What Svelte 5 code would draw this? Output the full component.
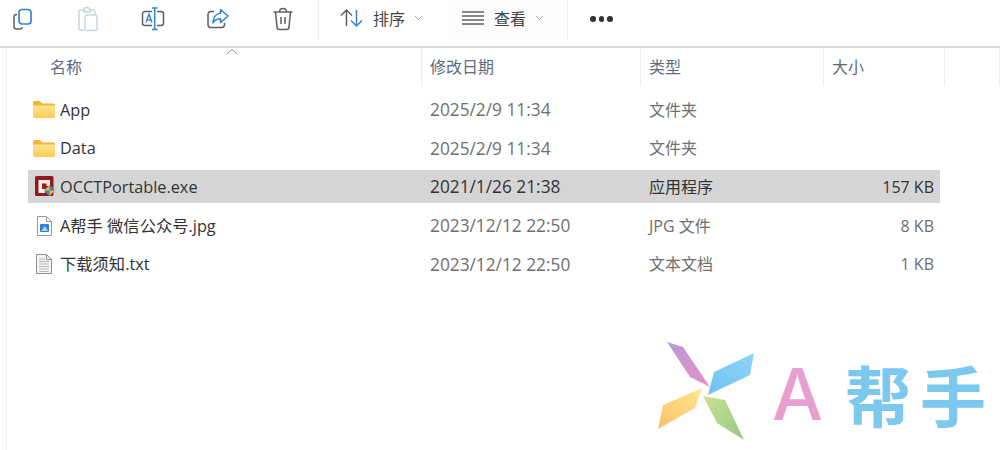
<script>
  const columns = ['名称', '修改日期', '类型', '大小']
  const files = [
    { name: 'App', date: '2025/2/9 11:34', type: '文件夹', size: '', icon: 'folder' },
    { name: 'Data', date: '2025/2/9 11:34', type: '文件夹', size: '', icon: 'folder' },
    { name: 'OCCTPortable.exe', date: '2021/1/26 21:38', type: '应用程序', size: '157 KB', icon: 'exe', selected: true },
    { name: 'A帮手 微信公众号.jpg', date: '2023/12/12 22:50', type: 'JPG 文件', size: '8 KB', icon: 'jpg', cjk: true },
    { name: '下载须知.txt', date: '2023/12/12 22:50', type: '文本文档', size: '1 KB', icon: 'txt', cjk: true }
  ]
</script>

<div class="window">
  <div class="toolbar">
    <div class="tools">
      <button class="tool" aria-label="复制">
        <svg width="24" height="24" viewBox="0 0 24 24" fill="none">
          <path d="M6 7.500H5.500A2.500 2.500 0 0 0 3 10v9.500A2.500 2.500 0 0 0 5.500 22H9a2.500 2.500 0 0 0 2.400-1.800" stroke="#5f5f5f" stroke-width="1.500"/>
          <rect x="8" y="2.500" width="12" height="14.500" rx="3" stroke="#2f86d1" stroke-width="1.700"/>
        </svg>
      </button>
      <button class="tool" aria-label="粘贴">
        <svg width="24" height="26" viewBox="0 0 24 26" fill="none">
          <path d="M8 4H4.500A1.500 1.500 0 0 0 3 5.500V22.500A1.500 1.500 0 0 0 4.500 24H8" stroke="#cfcfcf" stroke-width="1.400"/>
          <path d="M8 4.500C8 2.500 9 1.500 11 1.500S14 2.500 14 4.500V6H8Z" stroke="#cfcfcf" stroke-width="1.400"/>
          <path d="M14 4H17.500A1.500 1.500 0 0 1 19 5.500V8" stroke="#cfcfcf" stroke-width="1.400"/>
          <rect x="9" y="9" width="12" height="15.500" rx="1.800" stroke="#c3d6e6" stroke-width="1.400"/>
        </svg>
      </button>
      <button class="tool" aria-label="重命名">
        <svg width="24" height="24" viewBox="0 0 24 24" fill="none">
          <path d="M11 4.500H4A2.500 2.500 0 0 0 1.500 7V16A2.500 2.500 0 0 0 4 18.500H11M16 4.500H20A2.500 2.500 0 0 1 22.500 7V16A2.500 2.500 0 0 1 20 18.500H16" stroke="#5f5f5f" stroke-width="1.500"/>
          <path d="M11 1H16.500M13.700 1V22.500M11 22.500H16.500" stroke="#2f86d1" stroke-width="1.500"/>
          <path d="M5 15.500L8 7L11 15.500M6 13H10" stroke="#2f86d1" stroke-width="1.400"/>
        </svg>
      </button>
      <button class="tool" aria-label="共享">
        <svg width="24" height="24" viewBox="0 0 24 24" fill="none">
          <path d="M8 4.500H5A3 3 0 0 0 2 7.500V17.500A3 3 0 0 0 5 20.500H15.500A3 3 0 0 0 18.500 17.500V16" stroke="#5f5f5f" stroke-width="1.500"/>
          <path d="M14.500 2.500L22 9L14.500 15.500V11.800C11 11.800 8.500 13 7 16C7 11 9.500 6.800 14.500 6.200Z" stroke="#2f86d1" stroke-width="1.600" stroke-linejoin="round"/>
        </svg>
      </button>
      <button class="tool" aria-label="删除">
        <svg width="24" height="24" viewBox="0 0 24 24" fill="none" stroke="#5f5f5f" stroke-width="1.500">
          <path d="M2.500 5H21.500M8.500 5C8.500 2.800 10 1.500 12 1.500S15.500 2.800 15.500 5"/>
          <path d="M4.500 5L6 20A2.500 2.500 0 0 0 8.500 22.500H15.500A2.500 2.500 0 0 0 18 20L19.500 5"/>
          <path d="M10 10V17M14 10V17"/>
        </svg>
      </button>
    </div>
    <div class="divider"></div>
    <button class="menu sort">
      <svg width="24" height="20" viewBox="0 0 24 20" fill="none" stroke-width="1.500">
        <path d="M6.500 18V2M1 7.500L6.500 2L12 7.500" stroke="#5f5f5f"/>
        <path d="M16.500 2V18M11 12.500L16.500 18L22 12.500" stroke="#2f86d1"/>
      </svg>
      <span>排序</span>
      <svg class="chev" width="9" height="6" viewBox="0 0 9 6" fill="none"><path d="M1 1L4.500 4.500L8 1" stroke="#a8a8a8"/></svg>
    </button>
    <button class="menu view">
      <svg width="22" height="16" viewBox="0 0 22 16" fill="none" stroke="#606060" stroke-width="1.400">
        <path d="M0 2H22M0 6H22M0 10H22M0 14H22"/>
      </svg>
      <span>查看</span>
      <svg class="chev" width="9" height="6" viewBox="0 0 9 6" fill="none"><path d="M1 1L4.500 4.500L8 1" stroke="#a8a8a8"/></svg>
    </button>
    <div class="divider"></div>
    <div class="more"><i></i><i></i><i></i></div>
  </div>

  <div class="pane">
    <div class="head">
      {#each columns as col}
        <div class="col">{col}</div>
      {/each}
      <div class="col"></div>
      <svg class="sort-caret" width="12" height="7" viewBox="0 0 12 7" fill="none"><path d="M1 6L6 1.500L11 6" stroke="#8a8a8a"/></svg>
    </div>

    <div class="rows">
      {#each files as file}
        <div class="row" class:selected={file.selected}>
          <div class="name">
            <span class="icon">
              {#if file.icon === 'folder'}
                <svg width="22" height="17" viewBox="0 0 22 17">
                  <defs>
                    <linearGradient id="fold" x1="0" y1="0" x2="0" y2="1">
                      <stop offset="0" stop-color="#ffe590"/>
                      <stop offset="1" stop-color="#fccb55"/>
                    </linearGradient>
                  </defs>
                  <path d="M0 1.500A1.500 1.500 0 0 1 1.500 0H7L9.500 2.500H20.500A1.500 1.500 0 0 1 22 4V6H0Z" fill="#f2b43a"/>
                  <path d="M0 4.500H22V15.500A1.500 1.500 0 0 1 20.500 17H1.500A1.500 1.500 0 0 1 0 15.500Z" fill="url(#fold)"/>
                </svg>
              {:else if file.icon === 'exe'}
                <svg class="exe" width="20" height="21" viewBox="0 0 20 21">
                  <rect width="18.500" height="20" rx="1.500" fill="#8d1b1f"/>
                  <path d="M3.500 4H15V10H11.500V7.500H7V13H10V17H3.500Z" fill="#f4ece8"/>
                  <path d="M14.500 9L20 14.500L14.500 20L9 14.500Z" fill="#e9b92e"/>
                  <path d="M14.500 9L20 14.500H14.500Z" fill="#3f7fc8"/>
                  <path d="M9 14.500H14.500V20Z" fill="#3f7fc8"/>
                </svg>
              {:else if file.icon === 'jpg'}
                <svg width="16" height="20" viewBox="0 0 16 20" fill="none">
                  <path d="M1.500 .5H10.500L15.500 5.500V19.500H1.500Z" fill="#fff" stroke="#8e9aa6"/>
                  <path d="M10.500 .5V5.500H15.500" stroke="#8e9aa6"/>
                  <rect x="4" y="8" width="9" height="8" rx="1" fill="#2f7fd0"/>
                  <path d="M5 15L9 10L12 15Z" fill="#a9d4f5"/>
                </svg>
              {:else}
                <svg width="16" height="20" viewBox="0 0 16 20" fill="none">
                  <path d="M.5 .5H10.500L15.500 5.500V19.500H.5Z" fill="#f6f6f6" stroke="#8f8f8f"/>
                  <path d="M10.500 .5V5.500H15.500" stroke="#8f8f8f"/>
                  <path d="M3 5H9M3 7.500H13M3 10H13M3 12.500H13M3 15H13M3 17.500H13" stroke="#b4b4b4"/>
                </svg>
              {/if}
            </span>
            <span class="label" class:cjk={file.cjk}>{file.name}</span>
          </div>
          <div class="cell date">{file.date}</div>
          <div class="cell type">{file.type}</div>
          <div class="cell size">{file.size}</div>
        </div>
      {/each}
    </div>
  </div>

  <div class="brand">
    <svg width="100" height="100" viewBox="0 0 100 100">
      <defs>
        <linearGradient id="pk" x1="0" y1="0" x2="1" y2="1"><stop offset="0" stop-color="#b79ad8"/><stop offset="1" stop-color="#ea8fc4"/></linearGradient>
        <linearGradient id="bl" x1="1" y1="0" x2="0" y2="1"><stop offset="0" stop-color="#8fd4f5"/><stop offset="1" stop-color="#6fc2f2"/></linearGradient>
        <linearGradient id="or" x1="1" y1="0" x2="0" y2="1"><stop offset="0" stop-color="#ffe88a"/><stop offset="1" stop-color="#fdbf6f"/></linearGradient>
        <linearGradient id="gr" x1="0" y1="0" x2="1" y2="1"><stop offset="0" stop-color="#cfe08f"/><stop offset="1" stop-color="#93c98c"/></linearGradient>
      </defs>
      <path d="M10 0L26 5L53 45L33 35Z" fill="url(#pk)"/>
      <path d="M97 11L93 33L51 53L57 30Z" fill="url(#bl)"/>
      <path d="M45 46L38 66L1 87L6 63Z" fill="url(#or)"/>
      <path d="M46 54L68 58L87 98L60 81Z" fill="url(#gr)"/>
    </svg>
    <span class="a">A</span>
    <span class="zh">帮手</span>
  </div>
</div>

<style>
  :global(body) {
    margin: 0;
    background: #fff;
  }

  .window {
    position: relative;
    width: 1000px;
    height: 450px;
    overflow: hidden;
    background: #fff;
    color: #3f3f3f;
    font-family: "Open Sans", "Noto Sans CJK SC", sans-serif;
    font-size: 16px;
  }

  button {
    border: 0;
    padding: 0;
    background: none;
    font: inherit;
    color: inherit;
    display: flex;
    align-items: center;
    justify-content: center;
  }

  .toolbar {
    height: 46px;
    display: flex;
    align-items: flex-start;
    border-bottom: 2px solid #d9d9d9;
  }

  .tools {
    display: flex;
    gap: 41px;
    padding: 6px 0 0 11px;
    width: 318px;
    box-sizing: border-box;
  }

  .tool {
    width: 24px;
    height: 26px;
  }

  .divider {
    width: 1px;
    height: 40px;
    background: #ececec;
    flex: none;
  }

  .menu {
    box-sizing: border-box;
    height: 40px;
    padding-bottom: 4px;
    font-size: 16px;
    color: #444;
  }

  .menu span {
    margin: 0 9px 0 10px;
  }

  .sort {
    margin-left: 21px;
    margin-right: 25px;
  }

  .sort span {
    margin-left: 9px;
  }

  .view {
    padding: 0 15px 4px 14px;
    background: #fcfcfc;
    margin-right: 8px;
  }

  .more {
    display: flex;
    gap: 3px;
    padding: 16px 0 0 22px;
  }

  .more i {
    width: 5.500px;
    height: 5.500px;
    border-radius: 50%;
    background: #333;
  }

  .pane {
    margin-left: 6px;
    height: 402px;
    border-left: 1px solid #f0f0f0;
  }

  .head {
    position: relative;
    display: grid;
    height: 38px;
    grid-template-columns: 415px 219px 183px 121px 1fr;
    color: #5d6b7d;
  }

  .col {
    line-height: 38px;
    padding-left: 8px;
    border-right: 1px solid #ececec;
  }

  .col:first-child {
    padding-left: 43px;
  }

  .col:last-child {
    border: 0;
  }

  .sort-caret {
    position: absolute;
    left: 219px;
    top: 0;
  }

  .rows {
    margin-left: 21px;
    width: 912px;
    padding-top: 7px;
    display: flex;
    flex-direction: column;
    gap: 5.700px;
  }

  .row {
    display: grid;
    grid-template-columns: 393px 219px 183px 117px;
    height: 33px;
    align-items: center;
    white-space: nowrap;
  }

  .selected {
    background: #d5d5d5;
  }

  .name {
    display: flex;
    align-items: center;
    color: #333;
  }

  .label {
    font-size: 16.300px;
  }

  .label.cjk {
    padding-bottom: 2px;
  }

  .icon {
    width: 32px;
    display: flex;
    justify-content: center;
  }

  .exe {
    margin-left: 2px;
  }

  .cell {
    padding-left: 9px;
    color: #6f6f6f;
  }

  .selected .cell {
    color: #333;
  }

  .date {
    font-size: 17.300px;
  }

  .type {
    padding-bottom: 2px;
  }

  .size {
    text-align: right;
    padding: 0 6px 0 0;
  }

  .brand {
    position: absolute;
    left: 657px;
    top: 342px;
    display: flex;
    align-items: flex-start;
    white-space: nowrap;
  }

  .brand .a {
    margin: 12px 0 0 15px;
    font-family: "Inter", sans-serif;
    font-weight: 500;
    font-size: 72px;
    line-height: 80px;
    color: #e79fd0;
  }

  .brand .zh {
    margin: 11px 0 0 22px;
    font-family: "Noto Sans CJK SC", sans-serif;
    font-weight: 700;
    font-size: 66px;
    line-height: 80px;
    letter-spacing: 9px;
    color: #7cc9ef;
  }
</style>
